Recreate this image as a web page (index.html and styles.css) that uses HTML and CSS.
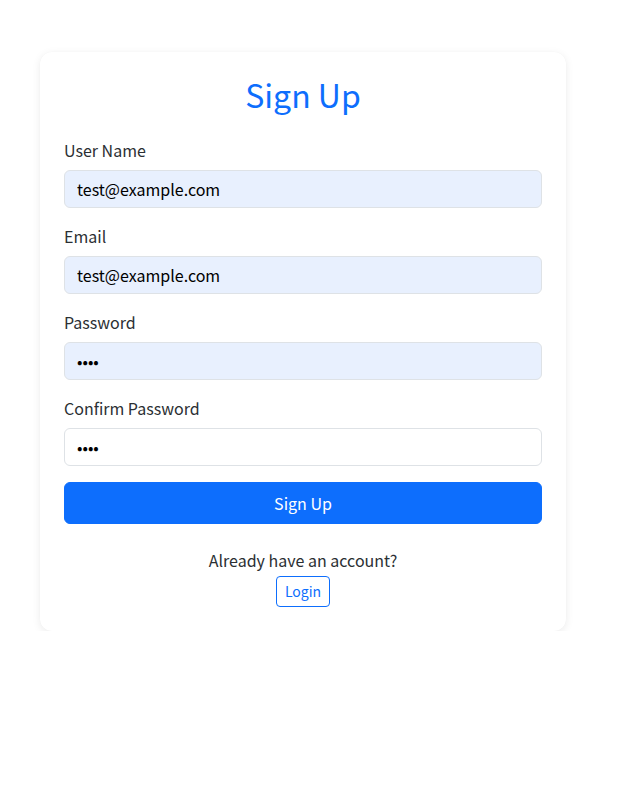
FILE: index.html
```html
<!DOCTYPE html>
<html lang="en">
<head>
<meta charset="utf-8">
<title>Sign Up</title>
<link rel="stylesheet" href="styles.css">
</head>
<body>
<div class="page">
  <div class="card">
    <h2 class="title">Sign Up</h2>
    <form class="form">
      <div class="field">
        <label class="label" for="u">User Name</label>
        <input class="input filled" id="u" type="text" value="test@example.com">
      </div>
      <div class="field">
        <label class="label" for="e">Email</label>
        <input class="input filled" id="e" type="email" value="test@example.com">
      </div>
      <div class="field">
        <label class="label" for="p">Password</label>
        <input class="input filled" id="p" type="password" value="test">
      </div>
      <div class="field">
        <label class="label" for="c">Confirm Password</label>
        <input class="input" id="c" type="password" value="test">
      </div>
      <button type="button" class="btn-primary">Sign Up</button>
    </form>
    <div class="footer">
      <p class="footer-text">Already have an account?</p>
      <button type="button" class="btn-outline">Login</button>
    </div>
  </div>
</div>
</body>
</html>
```
FILE: styles.css
```css
* { box-sizing: border-box; }
html, body { margin: 0; padding: 0; background: #fff; }
body {
  font-family: "Noto Sans CJK KR", "Noto Sans", sans-serif;
  font-size: 16px;
  line-height: 1.5;
  color: #2b2f33;
}
.page {
  padding: 52px 0 0 40px;
}
.card {
  width: 526px;
  padding: 24px;
  background: #fff;
  border-radius: 12px;
  box-shadow: 0 2px 8px rgba(0,0,0,0.08), 0 0 1px rgba(0,0,0,0.04);
  display: flex;
  flex-direction: column;
}
.title {
  margin: -1px 0 25px;
  font-size: 32px;
  font-weight: 400;
  line-height: 1.2;
  color: #0d6efd;
  text-align: center;
}
.form { display: flex; flex-direction: column; gap: 16px; }
.field { display: flex; flex-direction: column; }
.label {
  margin-bottom: 8px;
  font-size: 16px;
  line-height: 24px;
}
.input {
  height: 38px;
  padding: 6px 12px;
  font-family: inherit;
  font-size: 16px;
  color: #000;
  background: #fff;
  border: 1px solid #dee2e6;
  border-radius: 6px;
  outline: none;
}
.input.filled { background: #e8f0fe; }
.btn-primary {
  height: 42px;
  font-family: inherit;
  font-size: 16px;
  color: #fff;
  background: #0d6efd;
  border: 1px solid #0d6efd;
  border-radius: 6px;
}
.footer {
  margin-top: 24px;
  display: flex;
  flex-direction: column;
  align-items: center;
}
.footer-text { margin: 0 0 4px; line-height: 24px; }
.btn-outline {
  height: 31px;
  padding: 4px 8px;
  font-family: inherit;
  font-size: 14px;
  line-height: 21px;
  color: #0d6efd;
  background: #fff;
  border: 1px solid #0d6efd;
  border-radius: 4px;
}
```
